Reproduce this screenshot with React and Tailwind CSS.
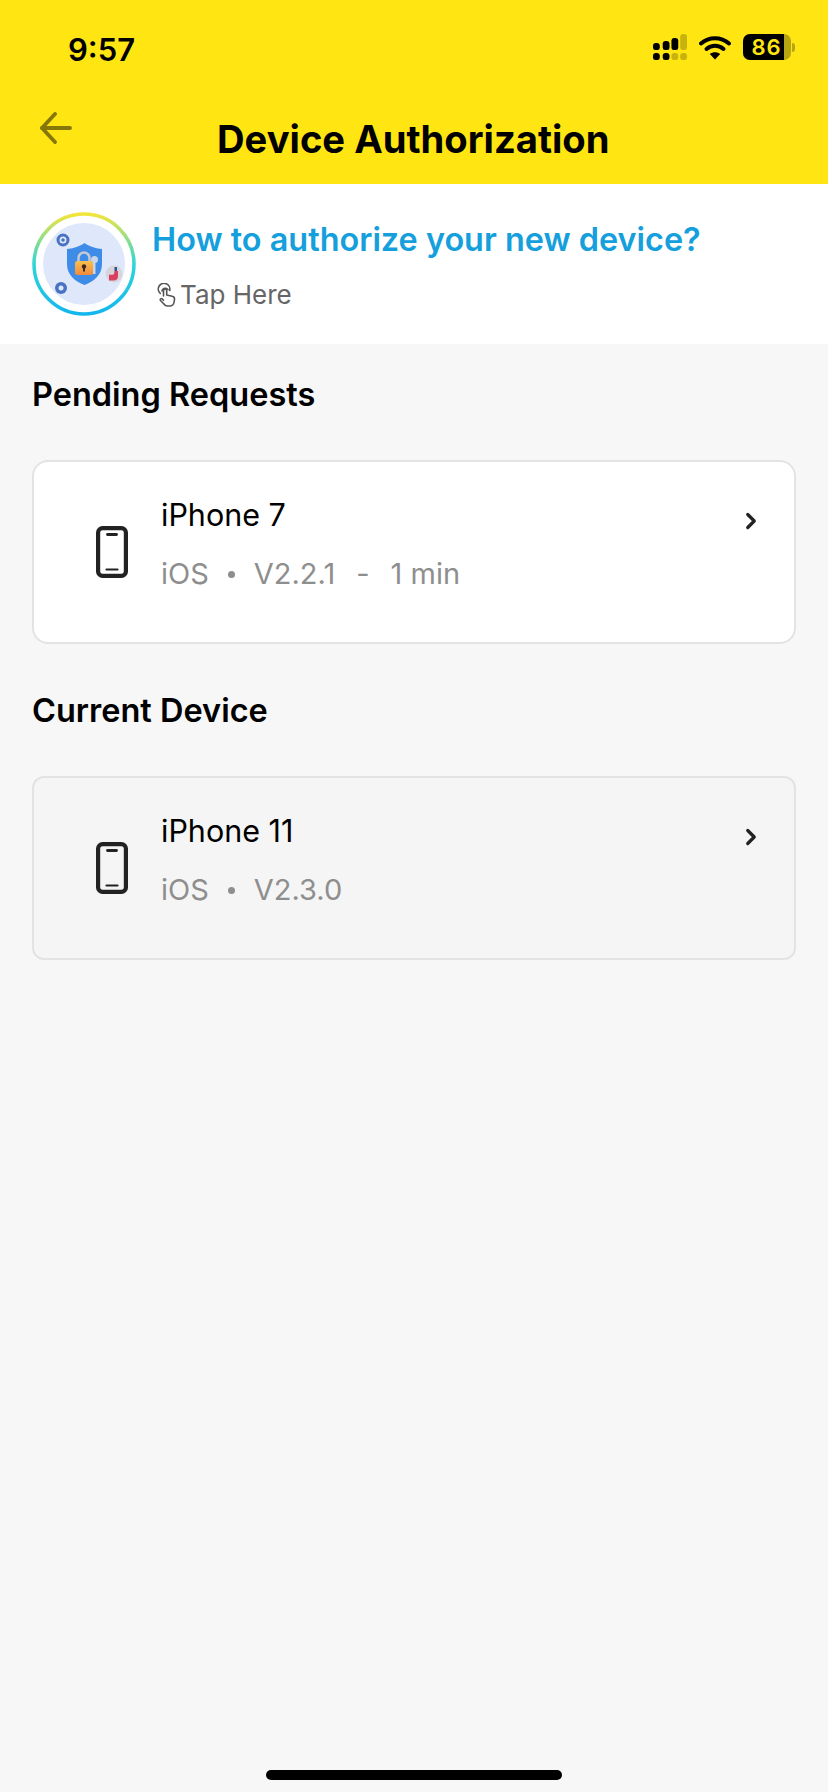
import { ChevronRight } from 'lucide-react';

const SignalIcon = () => (
  <svg width="34" height="26" viewBox="0 0 35 26" preserveAspectRatio="none">
    <rect x="0" y="9" width="7" height="7" rx="2.500" fill="#000" />
    <rect x="10" y="7" width="7" height="9" rx="2.500" fill="#000" />
    <rect x="19" y="4" width="7" height="12" rx="2.500" fill="#000" />
    <rect x="28" y="0" width="7" height="16" rx="2.500" fill="#000" fillOpacity="0.22" />
    <rect x="0" y="19" width="7" height="7" rx="2.500" fill="#000" />
    <rect x="10" y="19" width="7" height="7" rx="2.500" fill="#000" />
    <rect x="19" y="19" width="7" height="7" rx="2.500" fill="#000" fillOpacity="0.22" />
    <rect x="28" y="19" width="7" height="7" rx="2.500" fill="#000" fillOpacity="0.22" />
  </svg>
);

const WifiIcon = () => (
  <svg width="32" height="25" viewBox="0 0 32 25" fill="none">
    <path d="M2 8.500C10 1.500 22 1.500 30 8.500" stroke="#000" strokeWidth="4" strokeLinecap="round" />
    <path d="M7.500 14C12.500 9.800 19.500 9.800 24.500 14" stroke="#000" strokeWidth="4" strokeLinecap="round" />
    <path d="M16 24.500L10.800 19C13.800 16.600 18.200 16.600 21.200 19Z" fill="#000" />
  </svg>
);

const Battery = () => (
  <div className="flex items-center">
    <div className="flex h-[26px] w-[48px] items-center overflow-hidden rounded-[7px] bg-[#b8a512]">
      <div className="flex h-full w-[41px] items-center justify-center bg-black">
        <span className="pl-[6px] text-[22px] leading-none font-semibold tracking-[1px] text-[#ffe512]">86</span>
      </div>
    </div>
    <div className="ml-[1px] h-[9px] w-[3px] rounded-r-full bg-[#b8a512]" />
  </div>
);

const BackArrow = () => (
  <svg width="34" height="32" viewBox="0 0 34 32" fill="none" stroke="#857708" strokeWidth="3.800" strokeLinecap="round" strokeLinejoin="round">
    <path d="M31 16H3" />
    <path d="M16 2L3 16L16 30" />
  </svg>
);

const AuthLogo = () => (
  <svg width="104" height="104" viewBox="0 0 104 104" className="shrink-0">
    <defs>
      <linearGradient id="ring" x1="0.5" y1="0" x2="0.5" y2="1">
        <stop offset="0" stopColor="#f4e53a" />
        <stop offset="0.5" stopColor="#2ed6d8" />
        <stop offset="1" stopColor="#14b6ee" />
      </linearGradient>
      <linearGradient id="padlock" x1="0" y1="0" x2="0" y2="1">
        <stop offset="0" stopColor="#f9c04e" />
        <stop offset="1" stopColor="#f08a3a" />
      </linearGradient>
    </defs>
    <circle cx="52" cy="52" r="50" fill="#fff" stroke="url(#ring)" strokeWidth="3.500" />
    <circle cx="52" cy="52" r="41" fill="#dfe8fb" />
    {/* shield */}
    <path d="M52.500 31C58 35 65 36.500 70 37V52C70 63 62 69.500 52.500 73C43 69.500 35 63 35 52V37C40 36.500 47 35 52.500 31Z" fill="#3f8be8" />
    {/* key behind the lock */}
    <circle cx="62.500" cy="47.500" r="3.500" fill="#c9d6e8" />
    <rect x="60.500" y="49" width="3" height="13" fill="#c9d6e8" />
    {/* padlock */}
    <path d="M46.500 49v-3a5.500 5.500 0 0 1 11 0v3" fill="none" stroke="#c6cbd6" strokeWidth="2.400" />
    <rect x="43" y="49" width="18" height="14" rx="2.500" fill="url(#padlock)" />
    <circle cx="52" cy="54.500" r="2.200" fill="#3a2a1e" />
    <rect x="51" y="55" width="2" height="4.500" fill="#3a2a1e" />
    {/* small badges */}
    <circle cx="31" cy="28" r="5" fill="none" stroke="#4a72c4" strokeWidth="3" />
    <circle cx="31" cy="28" r="1.800" fill="#4a72c4" />
    <circle cx="29" cy="76" r="6" fill="#4a72c4" />
    <circle cx="29" cy="76" r="2.500" fill="#dfe8fb" />
    <circle cx="82" cy="62" r="8.500" fill="#d8d4dc" />
    <path d="M77 62.500c2 .5 4 .5 5-.5l.5-3H86v5.500c0 2.500-2 4-4 4h-5Z" fill="#d9405f" />
    <rect x="82.500" y="55" width="2.500" height="4" fill="#33508f" />
  </svg>
);

const TapIcon = () => (
  <svg width="21" height="24" viewBox="0 0 21 24" fill="none" stroke="#555" strokeWidth="1.600" strokeLinecap="round" strokeLinejoin="round" className="shrink-0">
    <path d="M7.500 13V7.500a1.600 1.600 0 0 1 3.200 0V12l5.500 1.300a2.800 2.800 0 0 1 2.300 3l-.4 2.700c-.4 2.500-2 4-4.500 4h-2c-1.600 0-2.900-.7-3.700-2L4.300 17.200c-.6-1 .9-2.300 1.900-1.300L7.500 17.200" />
    <path d="M4.300 10.500a5.800 5.800 0 1 1 9.400-3" />
    <path d="M6 8a3.400 3.400 0 0 1 6-1.500" />
  </svg>
);

const PhoneIcon = () => (
  <svg width="32" height="52" viewBox="0 0 32 52" fill="none" className="shrink-0">
    <rect x="2.100" y="2.100" width="27.800" height="47.800" rx="4.500" stroke="#222" strokeWidth="4.200" />
    <path d="M11.500 8.500H20.500" stroke="#222" strokeWidth="2.800" strokeLinecap="round" />
    <path d="M10.500 43.500H21.500" stroke="#222" strokeWidth="2.200" strokeLinecap="round" />
  </svg>
);

const DeviceCard = ({ name, os, version, age, muted }) => (
  <div className={`mt-[46px] flex h-[184px] items-start border-2 border-[#e3e3e3] pt-[36px] pr-[30px] pl-[62px] ${muted ? 'rounded-[12px] bg-[#f5f5f5]' : 'rounded-[16px] bg-white'}`}>
    <div className="mt-[28px] mr-[33px]">
      <PhoneIcon />
    </div>
    <div className="flex-1">
      <div className="text-[30.500px] leading-[34px] text-black">{name}</div>
      <div className="mt-[26px] flex h-[32px] items-center text-[29px] leading-[32px] text-[#8e8e8e]">
        <span>{os}</span>
        <span className="mx-[19px] h-[7px] w-[7px] rounded-full bg-[#8e8e8e]" />
        <span>{version}</span>
        {age && (
          <>
            <span className="mx-[21px]">-</span>
            <span>{age}</span>
          </>
        )}
      </div>
    </div>
    <ChevronRight size={26} strokeWidth={3} color="#222" className="mt-[10px]" />
  </div>
);

const App = () => {
  return (
    <div className="flex min-h-[1792px] flex-col bg-[#f7f7f7] font-['Inter',sans-serif]">
      {/* Status bar and title */}
      <div className="h-[184px] bg-[#ffe512]">
        <div className="flex h-[98px] items-start justify-between pt-[31px] pr-[33px] pl-[68px]">
          <span className="text-[31px] leading-[38px] font-semibold text-black">9:57</span>
          <div className="flex items-center gap-[12px] pt-[3px]">
            <SignalIcon />
            <WifiIcon />
            <Battery />
          </div>
        </div>
        <div className="flex items-start pl-[39px]">
          <div className="mt-[14px]">
            <BackArrow />
          </div>
          <h1 className="mt-[19px] ml-[144px] text-[38.200px] leading-[44px] font-bold text-black">Device Authorization</h1>
        </div>
      </div>

      {/* How-to banner */}
      <div className="flex h-[160px] items-center bg-white pl-[32px]">
        <AuthLogo />
        <div className="ml-[16px]">
          <div className="mt-[2px] text-[32.400px] leading-[40px] font-semibold text-[#159fdc]">How to authorize your new device?</div>
          <div className="mt-[19px] flex items-center text-[26px] leading-[32px] text-[#666]">
            <div className="ml-[4px]">
              <TapIcon />
            </div>
            <span className="ml-[3px]">Tap Here</span>
          </div>
        </div>
      </div>

      <div className="px-[32px]">
        <h2 className="mt-[32px] text-[32.500px] leading-[38px] font-semibold text-black">Pending Requests</h2>
        <DeviceCard name="iPhone 7" os="iOS" version="V2.2.1" age="1 min" />
        <h2 className="mt-[48px] text-[32.500px] leading-[38px] font-semibold text-black">Current Device</h2>
        <DeviceCard name="iPhone 11" os="iOS" version="V2.3.0" muted />
      </div>

      {/* Home indicator */}
      <div className="mt-auto flex justify-center pb-[12px]">
        <div className="h-[10px] w-[296px] rounded-full bg-black" />
      </div>
    </div>
  );
};

export default App;
